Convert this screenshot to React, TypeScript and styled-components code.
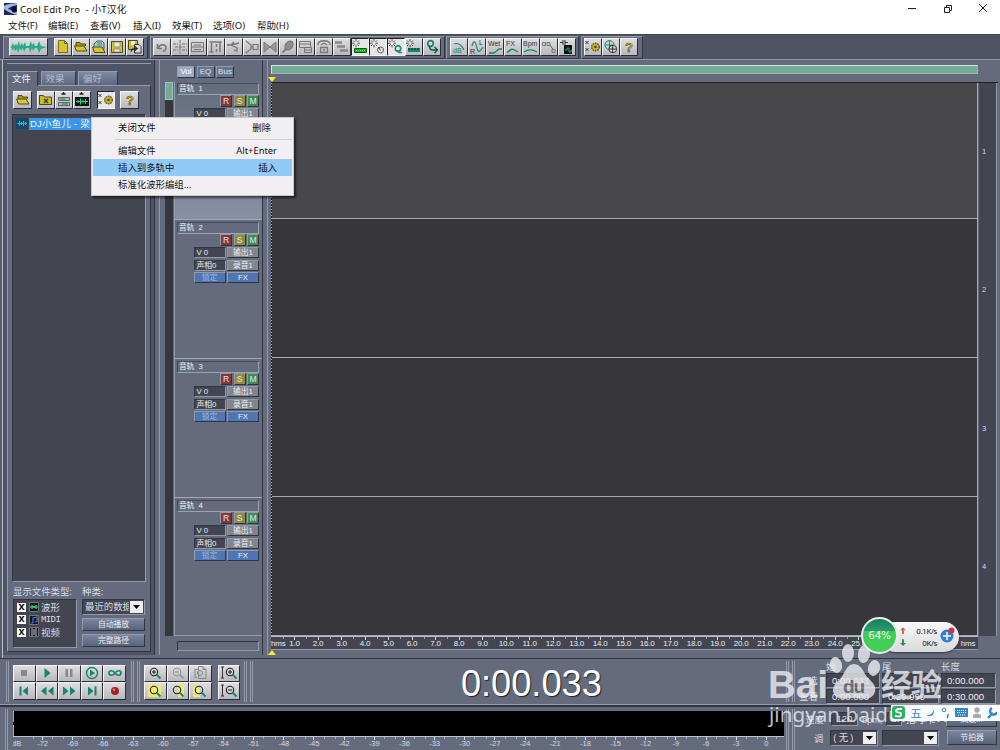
import React from 'react';
import styled, {createGlobalStyle, css} from 'styled-components';

const theme = {
    panel: '#636b7d',
    bar: '#4e5465',
    well: '#434651',
    light: '#929aab',
    dark: '#303541',
    teal: '#17846b',
    green: '#76aa94',
    text: '#d9dce3',
};

const bevel = css`
  border: 1px solid;
  border-color: ${theme.light} ${theme.dark} ${theme.dark} ${theme.light};
`
const sunken = css`
  border: 1px solid;
  border-color: ${theme.dark} ${theme.light} ${theme.light} ${theme.dark};
`

// ---------- icons, all on an 18x18 grid ----------

const T = theme.teal;

const Sun = () => <path d="M5 1v2.500M5 7v2.500M1 5.200h2.500M6.500 5.200H9M2 2.500l1.500 1.500M8 2.500L6.500 4M2 8l1.500-1.500M8 8L6.500 6.500" stroke="#444" strokeWidth=".9"/>

const Lens = ({c = '#222', handle = T}: { c?: string, handle?: string }) => <>
    <circle cx="8" cy="8" r="3.700" stroke={c} strokeWidth="1.100"/>
    <path d="M10.500 10.500l4 4" stroke={handle} strokeWidth="1.800"/>
</>

const XX = () => <path d="M1.500 3l3 3m0-3l-3 3M1.500 10l3 3m0-3l-3 3" stroke="#333" strokeWidth=".9"/>

const Cog = () => <>
    <circle cx="11.500" cy="9" r="3.800" fill="#c5b62c" stroke="#4c4614" strokeWidth="1.200" strokeDasharray="1.600 .8"/>
    <circle cx="11.500" cy="9" r="1.300" fill="#4c4614"/>
</>

const icons: Record<string, React.ReactNode> = {
    file: <path d="M4.500 2.500h6l3 3v9h-9zM10.500 2.500v3h3" fill="#d7c72d" stroke="#6d6312" strokeWidth=".9"/>,
    folder: <>
        <path d="M4 12V4.500h4l1 1.500h4.500v2" fill="#a3981e" stroke="#514b12"/>
        <path d="M4.500 13L2.500 8h9.500l3 5z" fill="#d7c72d" stroke="#514b12"/>
    </>,
    folderDoc: <>
        <path d="M4 11V6l3-3h5l2 2v6" fill="#a9cdca" stroke="#3a6560"/>
        <path d="M7 5h5M7 7h5" stroke="#2a8f86"/>
        <path d="M4.500 14.500L2.500 9H12l3 5.500z" fill="#d7c72d" stroke="#514b12"/>
    </>,
    folderX: <>
        <path d="M2.500 13.500v-9h4l1 1.500h7v7.500z" fill="#c8bb2a" stroke="#514b12"/>
        <path d="M7 8l4 4m0-4l-4 4" stroke="#453f10" strokeWidth="1.300"/>
    </>,
    save: <>
        <path d="M3.500 3.500h11v11h-11z" fill="#d7c72d" stroke="#514b12"/>
        <path d="M6 4h6v5H6zM6 11h6v3H6z" fill="#e8e8e8" stroke="#777" strokeWidth=".7"/>
    </>,
    saveAs: <>
        <path d="M2.500 2.500h9v9h-9z" fill="#c8bb2a" stroke="#514b12"/>
        <path d="M5 3h4v4H5z" fill="#eee"/>
        <path d="M8.500 6.500h4.500l2 2v6.500H8.500z" fill="#ddd" stroke="#333"/>
        <path d="M5 13.500c1-3 3-3 6-3l-2-2m2 2l-2 2" stroke="#222" strokeWidth="1.200"/>
    </>,
    undo: <path d="M4.500 6v4.500H9M5 10c2-4 8-4.500 8-.5 0 2-1.500 3.500-3 4" stroke="#777" strokeWidth="1.500"/>,
    cross: <path d="M9 2v14M2 6h5M11 6h5M2 12h5M11 12h5M4 9h10" stroke="#777" strokeWidth="1.100" strokeDasharray="3 .8"/>,
    list: <path d="M2.500 4.500h12v9h-12zM5 7h7M2.500 9h12M5 11.500h7" stroke="#777"/>,
    tool: <path d="M2.500 4h12M4.500 5v9M2.500 14h4M9.500 6v3M9.500 11v3M13 4v10" stroke="#777" strokeWidth="1.500"/>,
    cut: <path d="M2 7h4l8-2M6 7l6 3v3l-3-1M6 7l3-3" stroke="#777" strokeWidth="1.300"/>,
    cone: <path d="M3 3l5 4v4l-5 4M8 9h2M10 6.500h5v5h-5z" stroke="#777" strokeWidth="1.200"/>,
    bow: <path d="M3 4l6 5 6-5v10l-6-5-6 5z" fill="#999" stroke="#777"/>,
    leaf: <><ellipse cx="10" cy="7.500" rx="3.500" ry="5" transform="rotate(35 10 7.500)" fill="#8d8d8d" stroke="#6c6c6c"/><path d="M7 11l-3.500 3.500" stroke="#6c6c6c" strokeWidth="1.600"/></>,
    table: <path d="M2.500 3.500h11v6h-11zM2.500 6h11M7.500 9.500h7v5h-7zM7.500 12h7" stroke="#777"/>,
    robot: <path d="M3 5c3-3 9-3 12 0M3 5v2M15 5v2M6 7l3-2 3 2M5.500 9.500h7v5h-7zM8 12h2" stroke="#777" strokeWidth="1.300"/>,
    bars: <path d="M2 4.500h7M4 8.500h8M7 12.500h8" stroke="#888" strokeWidth="2.500"/>,
    sunGreen: <><Sun/><path d="M3.500 10.500h12v4h-12z" fill="#16ad26" stroke="#075f13"/><path d="M5 12.500h9" stroke="#5cf36b" strokeDasharray="1 1"/></>,
    sunCircle: <><Sun/><circle cx="11.500" cy="12" r="3" fill="#eee" stroke="#555"/><path d="M9.500 9l2 3.500" stroke="#333"/></>,
    sunQ: <><Sun/><circle cx="11" cy="10.500" r="2.700" stroke={T} strokeWidth="1.600"/><path d="M10 12.500l2 2h3" stroke={T} strokeWidth="1.400"/></>,
    sunRuler: <><Sun/><path d="M3 10h12v4H3z" fill={T}/><path d="M4 10v2M7 10v2M10 10v2M13 10v2" stroke="#053d2f"/></>,
    qArrow: <><circle cx="7.500" cy="5.500" r="2.800" stroke={T} strokeWidth="1.700"/><path d="M6.500 8c0 3 1 4 3 4h4m-2-3l3 3-3 3" stroke="#145345" strokeWidth="1.400"/></>,
    curve: <path d="M4 6c5-2 8 2 10 6" stroke={T} strokeWidth="1.200"/>,
    pan: <path d="M4 8c2-8 4-3 5 2s3 4 6-1" stroke={T} strokeWidth="1.200"/>,
    wet: <path d="M3 15h5l5-4h3" stroke={T} strokeWidth="1.300"/>,
    fx: <path d="M3 14h1c4-5 6-2 10 0" stroke={T} strokeWidth="1.300"/>,
    bpm: <path d="M2 14c4-3 8-3 13 0" stroke={T} strokeWidth="1.300"/>,
    nodes: <><path d="M2.500 4.500h3v3h-3zM7 4.500h3v3H7zM12 11.500h3v3h-3z" stroke="#777"/><path d="M10 7l3 4.500" stroke={T}/></>,
    device: <><path d="M6 7h8v9H6z" fill="#111"/><path d="M7 12h2v-2h2v4h2v-2h1" stroke="#25a66f"/><path d="M2 4.500h3M7 4.500h3M5 2v5M7 2v5" stroke="#333"/></>,
    options: <><XX/><Cog/></>,
    globe: <><circle cx="7.500" cy="7" r="4.500" fill="#c1d8d4" stroke={T}/><path d="M4 7h7M7.500 3v7" stroke={T}/><rect x="7" y="7.500" width="7.500" height="7" rx="3" fill="#d9d9db" stroke="#333"/><path d="M10.700 7.500v7M7 11h7.500" stroke="#333"/></>,
    insertTrack: <><path d="M8.500 0v3.500M6.500 3h4" stroke="#222" strokeWidth="1.400"/><path d="M3.500 6.500h11v3h-11zM3.500 11.500h11v3h-11z" fill="#a8bbb2" stroke="#666"/><path d="M5 8h5M7 13h6" stroke={T}/></>,
    insertWave: <><path d="M8.500 0v3.500M6.500 3h4" stroke="#222" strokeWidth="1.400"/><path d="M2 6h14v9H2z" fill="#0b1512"/><path d="M3 10.500h12M5 9v3M7.500 7.500v6M10 8.500v4M12.500 8v5" stroke="#2bd38c"/></>,

    stop: <path d="M6 6h6v6H6z" fill="#888"/>,
    play: <path d="M6.500 4l6 5-6 5z" fill={T}/>,
    pause: <path d="M5.500 5h2.500v8H5.500zM10 5h2.500v8H10z" fill="#888"/>,
    playLoop: <><circle cx="9" cy="9" r="5.500" stroke={T} strokeWidth="1.400"/><path d="M7 5.500l5 3.500-5 3.500z" fill={T}/></>,
    infinite: <path d="M9 9c-2-3-6-3-6 0s4 3 6 0 6-3 6 0-4 3-6 0z" stroke={T} strokeWidth="1.700"/>,
    first: <path d="M4.500 4.500h2v9h-2zM13 4.500v9L7.500 9z" fill={T}/>,
    rewind: <path d="M8.500 4.500v9L3 9zM15.500 4.500v9L10 9z" fill={T}/>,
    forward: <path d="M3 4.500v9L8.500 9zM10 4.500v9L15.500 9z" fill={T}/>,
    last: <path d="M5 4.500v9L10.500 9zM11.500 4.500h2v9h-2z" fill={T}/>,
    record: <><circle cx="9" cy="9" r="4" fill="#a51f24"/><circle cx="8" cy="7.700" r="1.200" fill="#df7a7c"/></>,

    zoomIn: <><Lens/><path d="M6 8h4M8 6v4" stroke="#222"/></>,
    zoomOut: <><Lens c="#999" handle="#999"/><path d="M6 8h4" stroke="#888"/></>,
    zoomPage: <><path d="M6 13.500H4v-8h3M7.500 2.500h4.500l3 3v9H7.500zM12 2.500v3h3" stroke="#888"/><circle cx="9" cy="9" r="2.500" stroke="#888"/></>,
    zoomSel: <><path d="M2 3h13v12H2z" fill="#eeea6b"/><Lens/></>,
    zoomRight: <><path d="M9 3h6v12H9z" fill="#eeea6b"/><Lens/></>,
    zoomLeft: <><path d="M2 3h7v12H2z" fill="#eeea6b"/><Lens/></>,
    vZoomIn: <><path d="M2.500 3v11M1 3h3M1 14h3" stroke="#333"/><g transform="translate(2)"><Lens/><path d="M6 8h4M8 6v4" stroke="#222"/></g></>,
    vZoomOut: <><path d="M2.500 3v11M1 3h3M1 14h3" stroke="#333"/><g transform="translate(2)"><Lens/><path d="M6 8h4" stroke="#222"/></g></>,
}

const letters: Record<string, [string, number, number, string][]> = {
    curve: [['dB', 3, 15, T]],
    pan: [['L', 11, 7, '#333'], ['R', 2, 16, '#333']],
    wet: [['Wet', 2, 8, '#333']],
    fx: [['FX', 2, 8, '#333']],
    bpm: [['Bpm', 1, 8, '#333']],
}

const Icon = ({name}: { name: string }) => (
    <svg width="18" height="18" viewBox="0 0 18 18" fill="none">
        {icons[name]}
        {letters[name]?.map(([t, x, y, c]) => (
            <text key={t} x={x} y={y} fill={c} fontSize="7" fontFamily="Liberation Sans, sans-serif">{t}</text>
        ))}
        {name === 'help' && <text x="5" y="14" fill="#d0bf2c" stroke="#4c4614" strokeWidth=".5" fontSize="13" fontWeight="bold" fontFamily="Liberation Sans, sans-serif">?</text>}
    </svg>
)

// ---------- header ----------

const menus: [string, number][] = [['文件(F)', 40], ['编辑(E)', 42], ['查看(V)', 43], ['插入(I)', 39], ['效果(T)', 41], ['选项(O)', 44], ['帮助(H)', 40]];

const Header = () => (
    <StyledHeader>
        <TitleBar>
            <svg width="13" height="12" viewBox="0 0 13 12">
                <path d="M0 0h13v12H0z" fill="#20295e"/>
                <path d="M0 3C5 0 9 1 13 0v2C8 3 6 4 4 6l9 3v3C8 11 3 8 0 6z" fill="#a9b6dc"/>
                <path d="M12 4a3 3 0 1 0 0 5z" fill="#080c2c"/>
            </svg>
            <Title>Cool Edit Pro&nbsp; - 小T汉化</Title>
            <svg width="82" height="12" viewBox="0 0 82 12" fill="none" stroke="#222">
                <path d="M0 5.500h8M36.500 4.500h5v5h-5zM38.500 4.500v-2h5v5h-2M71 1l8 8M79 1l-8 8"/>
            </svg>
        </TitleBar>
        <MenuBar>
            {menus.map(([m, w]) => <MenuItem key={m} w={w}>{m}</MenuItem>)}
        </MenuBar>
    </StyledHeader>
)

const StyledHeader = styled.header`
  height: 34px;
  background: #fff;
  color: #111;
`
const TitleBar = styled.div`
  height: 17px;
  padding: 0 10px 0 4px;
  display: flex;
  align-items: center;
`
const Title = styled.div`
  flex: 1;
  margin-left: 3px;
  font-size: 9.700px;
  letter-spacing: .15px;
  font-family: "Noto Sans", "Noto Sans CJK SC", sans-serif;
`
const MenuBar = styled.nav`
  display: flex;
  height: 15px;
  padding-left: 8px;
  line-height: 17px;
`
const MenuItem = styled.span<{ w: number }>`
  width: ${p => p.w}px;
  font-family: "Noto Sans", "Noto Sans CJK SC", sans-serif;
  font-size: 9.500px;
`

// ---------- toolbar ----------

const groups: { w: number, icons: string[] }[] = [
    {w: 295, icons: ['undo', 'cross', 'list', 'tool', 'cut', 'cone', 'bow', 'leaf', 'table', 'robot', 'bars', 'sunGreen', 'sunCircle', 'sunQ', 'sunRuler', 'qArrow']},
    {w: 133, icons: ['curve', 'pan', 'wet', 'fx', 'bpm', 'nodes', 'device']},
    {w: 62, icons: ['options', 'globe', 'help']},
];
const pressed = ['sunGreen', 'sunCircle', 'sunQ'];

const Toolbar = () => (
    <StyledToolbar>
        <ToolGroup w={145}>
            <Button w={39} h={18}>
                <svg width="36" height="16" viewBox="0 0 36 16">
                    <path d="M0 8L2 4l1 3 2-2 1 2 2-5 1 5 2-3 1 3 2-4 1 4 3 0 2-5 1 4 2-2 1 3 2 0 2-5 2 5 6 1-6 2-2 4-2-5-2 0-2 3-1-3-2 5-1-5-3 0-2 4-1-4-2 3-1-3-2 5-1-4-2 2-1-3-1 3z" fill="#2aab8c"/>
                </svg>
            </Button>
            <Gap w={6}/>
            {['file', 'folder', 'folderDoc', 'save', 'saveAs'].map(n => <Button key={n} w={18} h={18}><Icon name={n}/></Button>)}
        </ToolGroup>
        {groups.map(g => (
            <ToolGroup key={g.w} w={g.w}>
                {g.icons.map(n => <Button key={n} w={18} h={18} pressed={pressed.includes(n)}><Icon name={n}/></Button>)}
            </ToolGroup>
        ))}
    </StyledToolbar>
)

const StyledToolbar = styled.div`
  height: 25px;
  padding: 1px 0 0 3px;
  display: flex;
  gap: 1.500px;
  background: ${theme.bar};
  border-top: 1px solid #454b4d;
`
const ToolGroup = styled.div<{ w: number }>`
  ${bevel};
  width: ${p => p.w}px;
  padding: 1px 0 0 2.500px;
  display: flex;
  flex-shrink: 0;
  background: ${theme.panel};
  &:first-child { padding-left: 5px; }
`
const Button = styled.button<{ w: number, h: number, pressed?: boolean }>`
  width: ${p => p.w}px;
  height: ${p => p.h}px;
  flex-shrink: 0;
  padding: 0;
  display: flex;
  align-items: center;
  justify-content: center;
  overflow: hidden;
  background: ${p => p.pressed ? '#e6e6e8' : 'linear-gradient(#dedee0, #b8b8bd)'};
  border: 1px solid;
  border-color: ${p => p.pressed ? '#222 #f5f5f5 #f5f5f5 #222' : '#f5f5f5 #2b2e36 #2b2e36 #f5f5f5'};
  svg { flex-shrink: 0; }
`
const Gap = styled.div<{ w: number }>`
  width: ${p => p.w}px;
  flex-shrink: 0;
`

// ---------- file panel ----------

const FilePanel = () => (
    <StyledFilePanel>
        <Tabs>
            <Tab w={31} active>文件</Tab>
            <Tab w={35}>效果</Tab>
            <Tab w={40}>偏好</Tab>
        </Tabs>
        <FileBody>
            <FileTools>
                <Button w={19} h={18}><Icon name="folder"/></Button>
                <Gap w={5}/>
                {['folderX', 'insertTrack', 'insertWave'].map(n => <Button key={n} w={18} h={18}><Icon name={n}/></Button>)}
                <Gap w={6}/>
                <Button w={18} h={18} pressed><Icon name="options"/></Button>
                <Gap w={5}/>
                <Button w={19} h={18}><Icon name="help"/></Button>
            </FileTools>
            <FileList>
                <FileRow>
                    <svg width="12" height="11" viewBox="0 0 12 11" fill="none">
                        <path d="M0 0h12v11H0z" fill="#12496a"/>
                        <path d="M1 5.500h10M3.500 3v5M5.500 4v3M7.500 3v5M9.500 4v3" stroke="#3db4cc"/>
                    </svg>
                    <FileName>DJ小鱼儿 - 梁</FileName>
                </FileRow>
            </FileList>
            <Filters>
                <FilterCol w={64}>
                    <Label>显示文件类型:</Label>
                    <Types>
                        <TypeRow><Check>x</Check><TypeIcon c="#33e28f" d="M1 5h8M3 3v4M5 4v2M7 3v4"/>波形</TypeRow>
                        <TypeRow><Check>x</Check><TypeIcon c="#397ce0" d="M4 8V3l4-1v5M2 8h2M6 7h2"/><Mono>MIDI</Mono></TypeRow>
                        <TypeRow><Check>x</Check><TypeIcon c="#aaa" d="M3 1v8M7 1v8M5 2v6"/>视频</TypeRow>
                    </Types>
                </FilterCol>
                <FilterCol w={63}>
                    <Label>种类:</Label>
                    <Select><span>最近的数据</span><Arrow/></Select>
                    <FlatButton>自动播放</FlatButton>
                    <FlatButton>完整路径</FlatButton>
                </FilterCol>
            </Filters>
        </FileBody>
    </StyledFilePanel>
)

const TypeIcon = ({c, d}: { c: string, d: string }) => (
    <svg width="10" height="10" viewBox="0 0 10 10" fill="none"><path d="M.5.5h9v9h-9z" fill="#111722" stroke="#777"/><path d={d} stroke={c} strokeWidth="1.200"/></svg>
)
const Arrow = () => (
    <ArrowBox><svg width="7" height="4" viewBox="0 0 7 4"><path d="M0 0h7L3.500 4z" fill="#000"/></svg></ArrowBox>
)

const StyledFilePanel = styled.aside`
  width: 152px;
  padding: 3px 3px 3px 4px;
  background: ${theme.bar};
  border-right: 1px solid ${theme.dark};
  display: flex;
  flex-direction: column;
  flex-shrink: 0;
`
const Tabs = styled.div`
  border-top: 1px solid ${theme.light};
  height: 22px;
  display: flex;
  gap: 2.500px;
  align-items: flex-end;
`
const Tab = styled.div<{ w: number, active?: boolean }>`
  width: ${p => p.w}px;
  height: ${p => p.active ? 15 : 14}px;
  margin-bottom: ${p => p.active ? -1 : 0}px;
  z-index: 1;
  padding-left: 4px;
  line-height: 14px;
  border: solid;
  border-width: 1px 1px 0 1px;
  border-color: ${theme.light} ${theme.dark} ${theme.dark} ${theme.light};
  background: ${p => p.active ? theme.panel : 'linear-gradient(#7f8ba2, #5c6880)'};
  color: ${p => p.active ? '#eef0f4' : '#b5bcc9'};
`
const FileBody = styled.div`
  ${bevel};
  flex: 1;
  padding: 5px 0 0 5px;
  background: ${theme.panel};
`
const FileTools = styled.div`
  display: flex;
  height: 23px;
`
const FileList = styled.div`
  ${sunken};
  width: 134px;
  height: 468px;
  margin-left: -1px;
  padding: 3px 0 0 3px;
  background: ${theme.well};
`
const FileRow = styled.div`
  display: flex;
  height: 12px;
`
const FileName = styled.div`
  flex: 1;
  margin-left: 1px;
  padding-left: 1px;
  line-height: 12px;
  letter-spacing: .3px;
  background: #3c96e8;
  color: #e7f4ff;
  white-space: nowrap;
`
const Filters = styled.div`
  display: flex;
  gap: 5px;
  padding-top: 4px;
`
const FilterCol = styled.div<{ w: number }>`
  width: ${p => p.w}px;
`
const Label = styled.div`
  height: 13px;
  line-height: 12px;
  white-space: nowrap;
  color: ${theme.text};
`
const Types = styled.div`
  ${sunken};
  height: 49px;
  padding: 1px 0 0 3px;
  background: ${theme.well};
`
const TypeRow = styled.div`
  height: 12.500px;
  display: flex;
  align-items: center;
  gap: 2px;
  svg { margin-left: 1px; }
`
const Mono = styled.span`
  font: 9px "Liberation Mono", monospace;
  letter-spacing: -.6px;
`
const Check = styled.div`
  width: 9px;
  height: 9px;
  background: #fff;
  color: #000;
  font: bold 11px/7px "Liberation Sans", sans-serif;
  text-align: center;
`
const Select = styled.div<{ w?: number }>`
  ${sunken};
  width: ${p => p.w ? p.w + 'px' : 'auto'};
  height: 16px;
  padding-left: 2px;
  display: flex;
  justify-content: space-between;
  line-height: 14px;
  overflow: hidden;
  white-space: nowrap;
  background: ${theme.well};
  span { overflow: hidden; }
`
const ArrowBox = styled.div`
  width: 13px;
  margin: 1px;
  flex-shrink: 0;
  display: flex;
  align-items: center;
  justify-content: center;
  background: #eee;
`
const FlatButton = styled.div<{ w?: number }>`
  ${bevel};
  width: ${p => p.w ? p.w + 'px' : 'auto'};
  height: 13px;
  margin-top: 3px;
  line-height: 11px;
  font-size: 7.800px;
  text-align: center;
  background: linear-gradient(#7b869e, #58637b);
  color: #eee;
`

// ---------- tracks ----------

const TrackStrip = ({n}: { n: number }) => (
    <StyledStrip active={n === 1}>
        <TrackName>音轨&nbsp; {n}</TrackName>
        <StripRow h={12}>
            <Rsm c="#86353c">R</Rsm>
            <Rsm c="#8e8c3c">S</Rsm>
            <Rsm c="#3f8d55">M</Rsm>
        </StripRow>
        <StripRow><Field>V 0</Field><Chip c="#83858b">输出1</Chip></StripRow>
        <StripRow><Field>声相0</Field><Chip c="#83858b">录音1</Chip></StripRow>
        <StripRow><Chip c="#4f76b3" dim>锁定</Chip><Chip c="#4f76b3">FX</Chip></StripRow>
    </StyledStrip>
)

const TrackPanel = () => (
    <StyledTrackPanel>
        <ViewTabs>
            <ViewTab active>Vol</ViewTab>
            <ViewTab>EQ</ViewTab>
            <ViewTab>Bus</ViewTab>
        </ViewTabs>
        <StripArea>
            <VScroll><VThumb/></VScroll>
            <Strips>{[1, 2, 3, 4].map(n => <TrackStrip key={n} n={n}/>)}</Strips>
        </StripArea>
        <HScrollBox/>
    </StyledTrackPanel>
)

const StyledTrackPanel = styled.section`
  width: 104px;
  margin-left: 4px;
  padding: 6px 0 0 5px;
  flex-shrink: 0;
  background: ${theme.panel};
  border-left: 1px solid ${theme.light};
  border-right: 1px solid ${theme.dark};
`
const ViewTabs = styled.div`
  display: flex;
  gap: 1.500px;
  padding-left: 12px;
  height: 16px;
`
const ViewTab = styled.div<{ active?: boolean }>`
  ${bevel};
  width: 18px;
  height: 12px;
  font: 8px/10px "Liberation Sans", sans-serif;
  text-align: center;
  background: ${p => p.active ? '#9eabc4' : '#68758c'};
  color: ${p => p.active ? '#fff' : '#dfe3ea'};
`
const StripArea = styled.div`
  display: flex;
  height: 554px;
`
const VScroll = styled.div`
  width: 8px;
  background: #35363e;
`
const VThumb = styled.div`
  height: 18px;
  background: ${theme.green};
  border: 1px solid #9bc7b4;
`
const Strips = styled.div`
  margin-left: 1px;
  width: 89px;
  overflow: hidden;
  border-bottom: 1px solid ${theme.light};
`
const StyledStrip = styled.div<{ active: boolean }>`
  height: ${p => p.active ? 138 : 139}px;
  padding: 1px 3px 0 2px;
  border-left: 1px solid ${theme.light};
  border-bottom: 1px solid #a4aab6;
  background: ${p => p.active ? 'linear-gradient(#636b7d, #8791a4)' : theme.panel};
  &:not(:first-child) { padding-top: 2px; }
`
const TrackName = styled.div`
  ${sunken};
  border-color: #444a5a #9ca3b1 #9ca3b1 #444a5a;
  height: 12px;
  padding-left: 1px;
  line-height: 10px;
  font-size: 7.700px;
  color: #f1f2f5;
`
const StripRow = styled.div<{ h?: number }>`
  display: flex;
  justify-content: flex-end;
  gap: 1.500px;
  height: ${p => p.h || 11}px;
  margin-bottom: 1.300px;
`
const Rsm = styled.div<{ c: string }>`
  ${bevel};
  width: 12px;
  background: ${p => p.c};
  font: 8.500px/10px "Liberation Sans", sans-serif;
  text-align: center;
  color: #e6e8e5;
`
const Field = styled.div`
  ${sunken};
  width: 32px;
  padding-left: 2px;
  background: ${theme.well};
  font-size: 7.800px;
  line-height: 9px;
  color: #eee;
`
const Chip = styled.div<{ c: string, dim?: boolean }>`
  ${bevel};
  width: 32px;
  font-size: 7.800px;
  line-height: 9px;
  text-align: center;
  background: ${p => p.c};
  color: ${p => p.dim ? '#9db4d9' : '#edf0f4'};
`
const HScrollBox = styled.div`
  ${sunken};
  width: 82px;
  height: 10px;
  margin: 5px 0 0 12px;
`

const WaveArea = () => (
    <StyledWave>
        <PosBar/>
        <MarkerRow><svg width="8" height="5"><path d="M0 0h8L4 5z" fill="#f5ed26"/></svg></MarkerRow>
        <Lanes>
            <LaneCol>{[1, 2, 3, 4].map(n => <Lane key={n} active={n === 1}/>)}</LaneCol>
            <LaneNumbers>{[1, 2, 3, 4].map(n => <span key={n}>{n}</span>)}</LaneNumbers>
        </Lanes>
        <TimeRuler>
            <RulerUnit>hms</RulerUnit>
            {Array.from({length: 26}, (_, i) => <RulerMark key={i}>{(i + 1).toFixed(1)}</RulerMark>)}
            <RulerEnd>hms</RulerEnd>
        </TimeRuler>
        <MarkerRow bottom><svg width="8" height="5"><path d="M0 5h8L4 0z" fill="#f5ed26"/></svg></MarkerRow>
    </StyledWave>
)

const StyledWave = styled.main`
  flex: 1;
  min-width: 0;
  margin-left: 4px;
  padding: 5px 2px 0 3px;
  background: ${theme.panel};
  border-left: 1px solid ${theme.light};
`
const PosBar = styled.div`
  width: 707px;
  height: 9px;
  background: ${theme.green};
  border: 1px solid;
  border-color: #cfe4db #a7b1b5 #a7b1b5 #cfe4db;
`
const MarkerRow = styled.div<{ bottom?: boolean }>`
  height: 8px;
  padding-top: ${p => p.bottom ? 0 : 3}px;
  margin-left: -3px;
  svg { display: block; }
`
const Lanes = styled.div`
  display: flex;
  height: 554px;
  border-top: 1px solid #222;
`
const LaneCol = styled.div`
  width: 707px;
  border-right: 1px solid #a5a9b2;
  background: repeating-linear-gradient(#bdb55a 0 1px, #1f1f20 1px 3px);
  padding-left: 1px;
`
const Lane = styled.div<{ active: boolean }>`
  height: ${p => p.active ? 136 : 139}px;
  background: ${p => p.active ? '#48474b' : '#37363b'};
  border-bottom: 1px solid #a5a9b2;
`
const LaneNumbers = styled.div`
  width: 19px;
  border-left: 1px solid ${theme.panel};
  border-right: 1px solid ${theme.light};
  background: ${theme.well};
  display: flex;
  flex-direction: column;
  span {
    height: 138.500px;
    line-height: 138px;
    padding-left: 3px;
    font-size: 7.500px;
    font-family: "Liberation Sans", sans-serif;
  }
`
const TimeRuler = styled.div`
  width: 707px;
  height: 14px;
  overflow: hidden;
  display: flex;
  background: ${theme.well};
  border-top: 1px solid #b9bdc6;
  border-bottom: 1px solid ${theme.light};
  font: 8px/14px "Liberation Sans", sans-serif;
  letter-spacing: -.2px;
  color: #eceef2;
`
const RulerUnit = styled.div`
  width: 11.800px;
  flex-shrink: 0;
  white-space: nowrap;
`
const RulerEnd = styled(RulerUnit)`
  width: 16px;
  margin-left: 67px;
`
const RulerMark = styled.div`
  width: 23.500px;
  flex-shrink: 0;
  text-align: center;
  background: linear-gradient(#d5d8df, #d5d8df) 50% 0 / 1px 3px no-repeat, linear-gradient(#9ba0ac, #9ba0ac) 0 0 / 1px 2px no-repeat;
`

// ---------- transport ----------

const Transport = () => (
    <StyledTransport>
        <Grip/>
        <PadGrid cols={5} w={22.6}>
            {['stop', 'play', 'pause', 'playLoop', 'infinite', 'first', 'rewind', 'forward', 'last', 'record'].map(n =>
                <Button key={n} w={22.6} h={17.500}><Icon name={n}/></Button>)}
        </PadGrid>
        <Gap w={3}/><Grip/><Gap w={3}/><Grip/>
        <PadGrid cols={3} w={22.6}>
            {['zoomIn', 'zoomOut', 'zoomPage', 'zoomSel', 'zoomRight', 'zoomLeft'].map(n =>
                <Button key={n} w={22.6} h={17.500}><Icon name={n}/></Button>)}
        </PadGrid>
        <PadGrid cols={1} w={22}>
            {['vZoomIn', 'vZoomOut'].map(n => <Button key={n} w={22} h={17.500}><Icon name={n}/></Button>)}
        </PadGrid>
        <Gap w={2}/><Grip/><Gap w={3}/><Grip/>
        <Clock>0:00.033</Clock>
        <Grip/>
        <Gap w={3}/>
        <Grip/>
        <TimeTable>
            <i/><b>始</b><b>尾</b><b>长度</b>
            <em>选</em><TimeBox>0:00.033</TimeBox><TimeBox/><TimeBox>0:00.000</TimeBox>
            <em>查看</em><TimeBox>0:00.000</TimeBox><TimeBox>0:29.999</TimeBox><TimeBox>0:30.000</TimeBox>
        </TimeTable>
    </StyledTransport>
)

const StyledTransport = styled.section`
  height: 47px;
  padding: 2px 0 0 6px;
  display: flex;
  background: ${theme.panel};
  border-top: 1px solid ${theme.dark};
  border-bottom: 1px solid ${theme.light};
`
const Grip = styled.div`
  width: 3px;
  height: 41px;
  flex-shrink: 0;
  border: solid ${theme.light};
  border-width: 0 1px;
`
const PadGrid = styled.div<{ cols: number, w: number }>`
  display: grid;
  grid-template-columns: repeat(${p => p.cols}, ${p => p.w}px);
  grid-auto-rows: 17.500px;
  flex-shrink: 0;
  padding: 3.500px 2px 0 4px;
`
const Clock = styled.div`
  flex: 1;
  padding-left: 24px;
  text-align: center;
  font: 36.200px/45px "Liberation Sans", sans-serif;
  color: #fff;
  text-shadow: 1px 1px 1px #222;
`
const TimeTable = styled.div`
  width: 205px;
  flex-shrink: 0;
  display: grid;
  grid-template-columns: 29px 54px 57px 55px;
  grid-template-rows: 12px 16px 15px;
  column-gap: 2px;
  line-height: 12px;
  b { font-weight: normal; }
  em { font-style: normal; text-align: right; line-height: 15px; padding-right: 6px; white-space: nowrap; }
`
const TimeBox = styled.div`
  ${sunken};
  height: 15px;
  padding-left: 5px;
  background: ${theme.well};
  font: 9.500px/14px "Liberation Sans", sans-serif;
  color: #eef0f3;
`

// ---------- level meter ----------

const Bottom = () => (
    <StyledBottom>
        <Grip/>
        <Meter>
            <MeterBlack><Peak/><Peak/></MeterBlack>
            <MeterScale>
                <ScaleUnit>dB</ScaleUnit>
                {Array.from({length: 25}, (_, i) => <ScaleMark key={i}>{i === 24 ? '0' : i * 3 - 72}</ScaleMark>)}
            </MeterScale>
        </Meter>
        <Grip/>
        <Gap w={3}/>
        <Grip/>
        <Tempo>
            <TempoRow h={18}>
                <em>速度</em><SmallBox w={27}>120</SmallBox><span>bpm,</span><SmallBox w={16}>4</SmallBox><span>拍/小节</span>
                <Spacer/><FlatButton w={51}>高级...</FlatButton>
            </TempoRow>
            <TempoRow h={19}>
                <em>调</em><Select w={49}><span>( 无 )</span><Arrow/></Select><Select w={58}><span/><Arrow/></Select>
                <Spacer/><FlatButton w={51}>节拍器</FlatButton>
            </TempoRow>
        </Tempo>
    </StyledBottom>
)

const StyledBottom = styled.footer`
  height: 45px;
  padding: 2px 0 0 5px;
  display: flex;
  background: ${theme.panel};
  border-top: 2px solid ${theme.dark};
`
const Meter = styled.div`
  width: 778px;
  flex-shrink: 0;
  padding: 2px 0 0 5px;
`
const MeterBlack = styled.div`
  width: 771px;
  height: 26px;
  display: flex;
  flex-direction: column;
  justify-content: space-between;
  background: #000;
  border-bottom: 1px solid #bfc3cc;
`
const Peak = styled.div`
  width: 1px;
  height: 11px;
  background: #b9b54a;
`
const MeterScale = styled.div`
  height: 14px;
  display: flex;
  overflow: hidden;
  font: 7.500px/14px "Liberation Sans", sans-serif;
`
const ScaleUnit = styled.div`
  width: 15.500px;
  flex-shrink: 0;
  margin-left: -1px;
`
const ScaleMark = styled.div`
  width: 30.170px;
  flex-shrink: 0;
  text-align: center;
  background: linear-gradient(#d5d8df, #d5d8df) 50% 0 / 1px 3px no-repeat, linear-gradient(#a5aab6, #a5aab6) 20% 0 / 1px 2px no-repeat, linear-gradient(#a5aab6, #a5aab6) 85% 0 / 1px 2px no-repeat;
`
const Tempo = styled.div`
  flex: 1;
  min-width: 0;
  padding: 1px 3px 0 0;
`
const TempoRow = styled.div<{ h: number }>`
  height: ${p => p.h}px;
  display: flex;
  align-items: center;
  gap: 4px;
  white-space: nowrap;
  em { width: 32px; padding-right: 3px; font-style: normal; text-align: right; }
  span { letter-spacing: -.2px; }
  ${FlatButton} { height: 15px; margin: 0; line-height: 13px; }
`
const SmallBox = styled.div<{ w: number }>`
  ${sunken};
  width: ${p => p.w}px;
  height: 14px;
  background: ${theme.well};
  font: 9.500px/12px "Liberation Sans", sans-serif;
  text-align: center;
`
const Spacer = styled.div`
  flex: 1;
`

// ---------- floating layers ----------

const ContextMenu = () => (
    <StyledContext>
        <ContextRow><span>关闭文件</span><span>删除</span></ContextRow>
        <Divider/>
        <ContextRow><span>编辑文件</span><span>Alt+Enter</span></ContextRow>
        <ContextRow active><span>插入到多轨中</span><span>插入</span></ContextRow>
        <ContextRow><span>标准化波形编组...</span></ContextRow>
    </StyledContext>
)

const StyledContext = styled.div`
  position: absolute;
  left: 91px;
  top: 117px;
  width: 203px;
  height: 79px;
  padding: 1px;
  background: #f1eff1;
  border: 1px solid #c9c9cb;
  box-shadow: 2px 2px 2px rgba(0, 0, 0, .55);
  color: #111;
  font-family: "Noto Sans", "Noto Sans CJK SC", sans-serif;
`
const ContextRow = styled.div<{ active?: boolean }>`
  height: 17px;
  padding: 0 15px 0 25px;
  display: flex;
  justify-content: space-between;
  line-height: 17px;
  background: ${p => p.active ? '#91c9f7' : 'none'};
  &:first-child { padding-right: 21px; }
`
const Divider = styled.div`
  height: 1px;
  margin: 3px 0 2px 22px;
  background: #cfcdd0;
`

const NetBall = () => (
    <StyledNet>
        <Pill>
            <Speed><Dir viewBox="0 0 7 9"><path d="M3.500 0L7 3.500H4.700V8H2.300V3.500H0z" fill="#e06745"/></Dir>0.1K/s</Speed>
            <Speed><Dir viewBox="0 0 7 9"><path d="M3.500 8L0 4.500h2.300V0h2.400v4.500H7z" fill="#269452"/></Dir>0K/s</Speed>
            <PlusBadge viewBox="0 0 15 16">
                <circle cx="7" cy="9" r="6.500" fill="#2f7de0"/>
                <path d="M7 5v8M3 9h8" stroke="#fff" strokeWidth="1.500"/>
                <circle cx="11.500" cy="3.500" r="3" fill="#da3036"/>
            </PlusBadge>
        </Pill>
        <Ball>64%</Ball>
    </StyledNet>
)

const StyledNet = styled.div`
  position: absolute;
  left: 861px;
  top: 617px;
  width: 99px;
  height: 38px;
`
const Pill = styled.div`
  margin: 5px 0 0 19px;
  width: 79px;
  height: 30px;
  padding: 3px 16px 3px 20px;
  border-radius: 15px;
  background: linear-gradient(#fafafa, #d9d9dc);
  box-shadow: 0 1px 2px rgba(0, 0, 0, .5);
  color: #111;
`
const Speed = styled.div`
  height: 12px;
  width: 37px;
  display: flex;
  align-items: center;
  justify-content: space-between;
  font: 7.800px/12px "Noto Sans", sans-serif;
  letter-spacing: -.3px;
  white-space: nowrap;
`
const Dir = styled.svg`
  width: 6px;
  height: 8px;
`
const PlusBadge = styled.svg`
  position: absolute;
  width: 15px;
  height: 16px;
  right: 5px;
  top: 10px;
`
const Ball = styled.div`
  position: absolute;
  left: 0;
  top: 0;
  width: 37px;
  height: 37px;
  border-radius: 50%;
  border: 2px solid #e8efe9;
  background: linear-gradient(#15805a 0, #2d9970 35%, #3ccc57 36%, #45cf5a 100%);
  font: 10.500px/32px "DejaVu Sans", sans-serif;
  letter-spacing: -.3px;
  text-align: center;
  color: #e4f7e6;
`

const ImeBar = () => (
    <StyledIme>
        <svg width="14" height="14" viewBox="0 0 14 14"><rect width="13" height="13" rx="3" fill="#2bb262"/><path d="M10 3C4 2 3 5 5 6s5 0 4 3-5 1-6 1" stroke="#fff" strokeWidth="1.800" fill="none"/></svg>
        <ImeText>五</ImeText>
        <svg width="71" height="14" viewBox="0 0 71 14" fill="none">
            <path d="M6 2c3 4-1 8-6 7 5 4 11-2 6-7z" fill="#3484c9"/>
            <circle cx="18" cy="4" r="1.800" stroke="#3484c9"/><path d="M22 8v2l-1 2" stroke="#3484c9" strokeWidth="1.500"/>
            <path d="M29 2h13v9H29z" fill="#3484c9"/>
            <path d="M31 4.500h9M31 6.500h9M32 9h7" stroke="#fff" strokeDasharray="1 1"/>
            <circle cx="51" cy="4" r="2.700" fill="#aaa"/><path d="M47 12V9q4-3 8 0v3z" fill="#aaa"/>
            <path d="M62 12l5-5M66 2a3.500 3.500 0 1 0 5 4" stroke="#3484c9" strokeWidth="2.400"/>
        </svg>
    </StyledIme>
)

const StyledIme = styled.div`
  position: absolute;
  left: 891px;
  top: 705px;
  width: 109px;
  height: 16px;
  padding: 1px 0 0 1px;
  display: flex;
  background: #fbfcfd;
`
const ImeText = styled.div`
  width: 20px;
  flex-shrink: 0;
  text-align: center;
  font: 11.500px/14px "Noto Sans CJK SC", sans-serif;
  color: #3484c9;
`

const Watermark = () => (
    <WatermarkSvg viewBox="0 0 190 95" width="190" height="95">
        <g fill="#eef0f3" fontFamily="Liberation Sans, Noto Sans CJK SC, sans-serif">
            <text x="1" y="56" fontSize="39" fontWeight="bold" textLength="60" lengthAdjust="spacingAndGlyphs">Bai</text>
            <ellipse cx="69" cy="23" rx="6" ry="8" transform="rotate(-15 69 23)"/>
            <ellipse cx="81" cy="11" rx="6" ry="9"/>
            <ellipse cx="97" cy="12" rx="6" ry="9" transform="rotate(8 97 12)"/>
            <ellipse cx="107" cy="26" rx="6" ry="8" transform="rotate(15 107 26)"/>
            <path d="M87 22c8 0 9 9 15 15s8 9 5 15c-4 7-12 4-20 4s-16 3-20-4c-3-6 1-10 6-15s6-15 14-15z"/>
            <text x="76" y="51" fontSize="19" fontWeight="bold" fill="#6d7483" textLength="22">du</text>
            <text x="114" y="54" fontSize="31" fontWeight="bold" textLength="61" fontFamily="Noto Sans CJK SC, sans-serif">经验</text>
            <text x="2" y="80" fontSize="20" fontFamily="Noto Sans, sans-serif" textLength="179" lengthAdjust="spacingAndGlyphs">jingyan.baidu.com</text>
        </g>
    </WatermarkSvg>
)

const WatermarkSvg = styled.svg`
  position: absolute;
  left: 767px;
  top: 642px;
  opacity: .78;
`

const App = () => (
    <>
        <GlobalStyle/>
        <Window>
            <Header/>
            <Toolbar/>
            <Workspace>
                <FilePanel/>
                <TrackPanel/>
                <WaveArea/>
            </Workspace>
            <Transport/>
            <Bottom/>
            <ContextMenu/>
            <Watermark/>
            <NetBall/>
            <ImeBar/>
        </Window>
    </>
)

const GlobalStyle = createGlobalStyle`
  * { box-sizing: border-box; }
  body { margin: 0; overflow: hidden; }
`
const Window = styled.div`
  position: relative;
  width: 1000px;
  height: 750px;
  overflow: hidden;
  background: ${theme.panel};
  color: ${theme.text};
  font: 9.400px "Liberation Sans", "Noto Sans CJK SC", sans-serif;
`
const Workspace = styled.div`
  height: 599px;
  padding: 0 0 3px 3px;
  display: flex;
  background: linear-gradient(90deg, #555c6c 0 2px, #b9bec9 2px 3px, ${theme.panel} 3px);
  border-top: 1px solid ${theme.light};
`

export default App;
